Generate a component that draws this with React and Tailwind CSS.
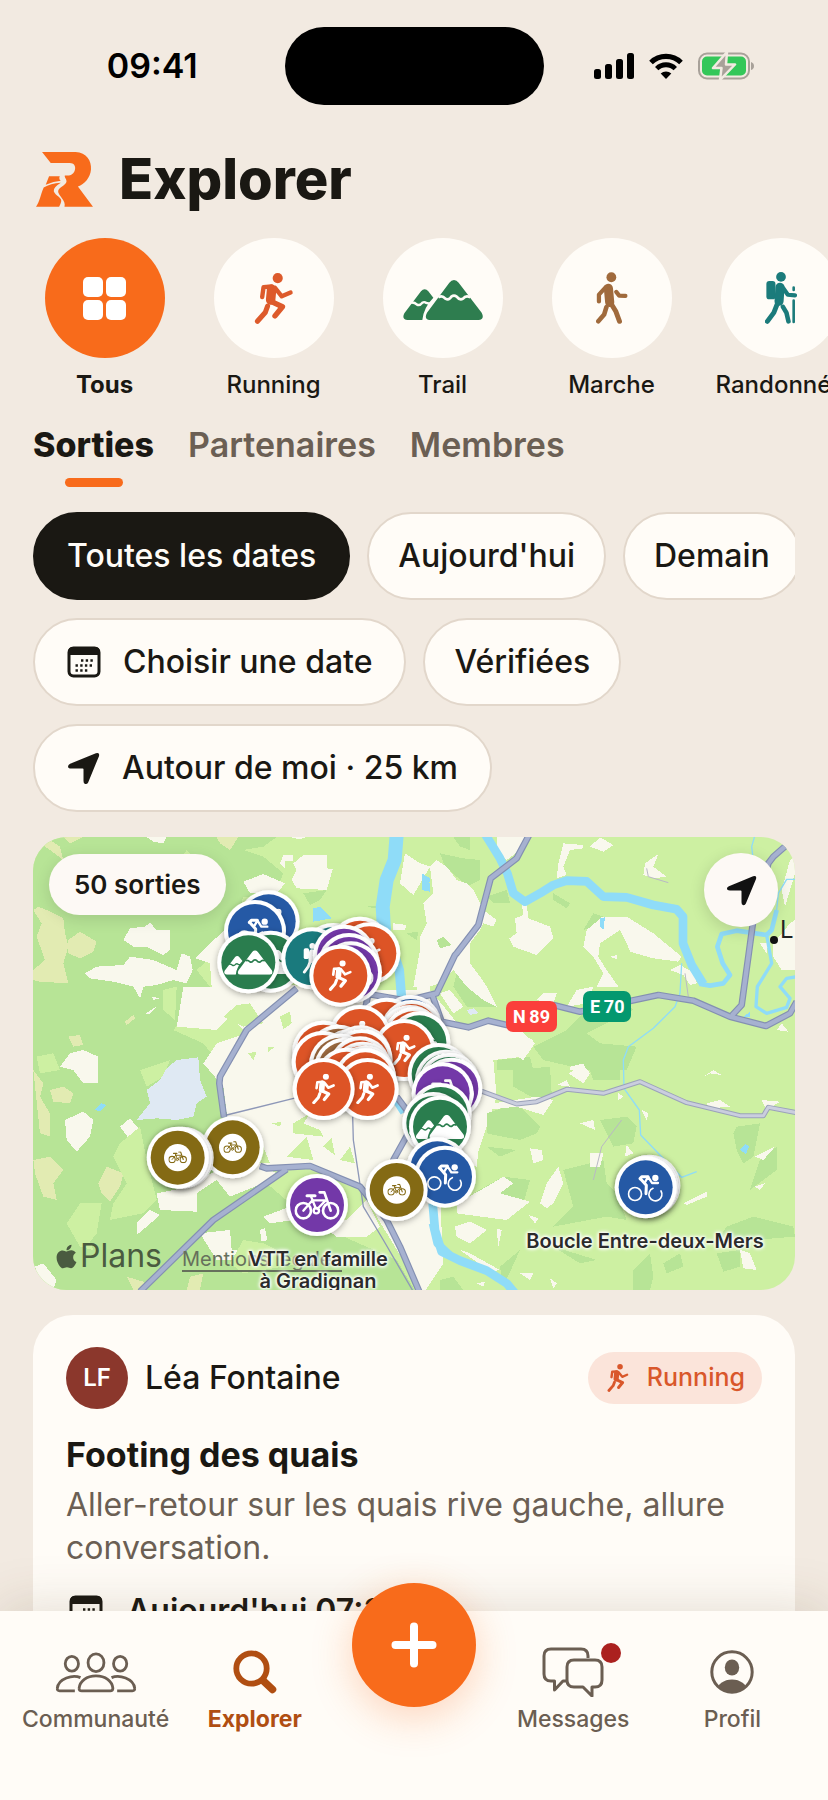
import React from "react";
import { FaApple } from "react-icons/fa";

const ORANGE = "#f86b1b";

function Runner({ className, ...rest }) {
  return (
    <svg viewBox="0 0 114 151" className={className} fill="none" stroke="currentColor" strokeLinecap="round" strokeLinejoin="round" aria-hidden="true" {...rest}>
      <circle cx="68" cy="15" r="15" fill="currentColor" stroke="none" />
      <path d="M22 71 L26 42 L50 40" strokeWidth="13" />
      <path d="M50 48 L47 80" strokeWidth="28" />
      <path d="M60 44 L80 69 L106 58" strokeWidth="13" />
      <path d="M48 84 L82 100 L60 127" strokeWidth="16" />
      <path d="M38 98 L31 117 L8 143" strokeWidth="15" />
    </svg>
  );
}

function Walker({ className, ...rest }) {
  return (
    <svg viewBox="0 0 98 157" className={className} fill="none" stroke="currentColor" strokeLinecap="round" strokeLinejoin="round" aria-hidden="true" {...rest}>
      <circle cx="47" cy="15" r="15" fill="currentColor" stroke="none" />
      <path d="M38 49 L42 92" strokeWidth="28" />
      <path d="M30 45 L9 68 L9 89" strokeWidth="13" />
      <path d="M62 60 L71 71 L90 72" strokeWidth="13" />
      <path d="M44 92 L61 120 L72 150" strokeWidth="15" />
      <path d="M32 106 L25 129 L7 150" strokeWidth="14" />
    </svg>
  );
}

function Hiker({ className, ...rest }) {
  return (
    <svg viewBox="0 0 98 160" className={className} fill="none" stroke="currentColor" strokeLinecap="round" strokeLinejoin="round" aria-hidden="true" {...rest}>
      <circle cx="49" cy="15" r="15" fill="currentColor" stroke="none" />
      <rect x="4" y="28" width="28" height="56" rx="9" fill="currentColor" stroke="none" />
      <path d="M46 47 L43 90" strokeWidth="28" />
      <path d="M56 50 L70 70 L92 72" strokeWidth="13" />
      <path d="M88 48 V55 M88 88 V154" strokeWidth="8" />
      <path d="M40 92 L27 125 L7 152" strokeWidth="15" />
      <path d="M55 107 L66 126 L72 152" strokeWidth="14" />
    </svg>
  );
}

function Mountains({ className, snow, ...rest }) {
  return (
    <svg viewBox="0 0 240 120" className={className} aria-hidden="true" {...rest}>
      <path fill="currentColor" d="M65 28 Q71 28 76 34 L91 53 Q62 82 58 120 H14 Q-5 118 4 100 L54 34 Q59 28 65 28Z" />
      <path fill="currentColor" d="M153 0 Q161 0 167 8 L236 98 Q246 118 226 120 H80 Q62 118 72 98 L139 8 Q145 0 153 0Z" />
      <path fill="none" stroke={snow} strokeWidth="8" d="M106 52 Q118 45 127 56 Q138 62 145 50 Q153 44 161 50 Q170 62 180 56 Q188 45 202 52" />
      <path fill="none" stroke={snow} strokeWidth="7" d="M22 68 Q34 66 42 74 Q50 78 58 68 Q64 64 70 69 L84 72" />
    </svg>
  );
}

function Cyclist(props) {
  return (
    <svg viewBox="0 0 108 84" fill="none" stroke="currentColor" strokeLinecap="round" strokeLinejoin="round" aria-hidden="true" {...props}>
      <circle cx="84" cy="11" r="9.500" fill="currentColor" stroke="none" />
      <circle cx="23" cy="59" r="19.500" strokeWidth="5" />
      <path d="M77 42 A19.500 19.500 0 1 0 101 50" strokeWidth="5" />
      <path d="M38 13 L44 7 H62" strokeWidth="9" />
      <path d="M40 14 L57 33 L56 58" strokeWidth="9" />
      <path d="M62 8 L54 22 M62 7 L74 26 H92" strokeWidth="7" />
    </svg>
  );
}

function Bike(props) {
  return (
    <svg viewBox="0 0 136 88" fill="none" stroke="currentColor" strokeLinecap="round" strokeLinejoin="round" aria-hidden="true" {...props}>
      <circle cx="27" cy="60" r="23" strokeWidth="8" />
      <circle cx="109" cy="60" r="23" strokeWidth="8" />
      <circle cx="66" cy="60" r="8" strokeWidth="7" />
      <path d="M38 15 H62" strokeWidth="9" />
      <path d="M50 17 L64 52 M55 28 L27 60 M55 29 H94 L69 55" strokeWidth="7" />
      <path d="M76 5 H90 L109 60" strokeWidth="8" />
    </svg>
  );
}

function Calendar({ className }) {
  return (
    <svg viewBox="0 0 34 32" className={className} aria-hidden="true">
      <rect x="2" y="2" width="30" height="28" rx="4.500" fill="none" stroke="currentColor" strokeWidth="3" />
      <path d="M1 9 V6 Q1 1 6 1 H28 Q33 1 33 6 V9Z" fill="currentColor" />
      <path d="M14 14.500 H27 M8.500 19.500 H27 M8.500 24.500 H21" stroke="currentColor" strokeWidth="2.400" strokeDasharray="2.400 2.300" />
    </svg>
  );
}

function LocationArrow({ className }) {
  return (
    <svg viewBox="0 0 32 32" className={className} aria-hidden="true">
      <path fill="currentColor" d="M28 1.200 Q32 0 31 4 L20.500 29.500 Q19.500 31.500 17.500 31 Q16 30.500 16 28 V16.800 Q16 16 15.200 16 H4 Q1 16 1 14 Q1 12.500 3 11.500Z" />
    </svg>
  );
}

function Logo() {
  return (
    <svg viewBox="47 36 170 164" className="h-[55px] w-[57px]" fill={ORANGE} role="img" aria-label="R">
      <path d="M65 36 H165 C198 38 213 62 211 88 C209 112 192 132 172 139 L217 199 H132 C138 180 112 166 113 152 C116 140 136 136 138 124 C138 115 131 112 133 106 H145 C167 104 172 69 148 69 H91 Z" />
      <path d="M86 108 H118 Q114 116 121 122 Q100 124 76 134Z" />
      <path d="M70 142 Q90 130 121 128 Q98 142 100 153 C104 166 126 172 122 184 Q120 192 116 199 H47 C58 185 60 165 70 142Z" />
    </svg>
  );
}

const FILLS = { run: "#dd5426", trail: "#2a7d4e", bike: "#7338a8", road: "#2559a5", hike: "#1a7a7d", walk: "#9c6a40", gravel: "#846a14" };

const PINS = [
  ["road", 716, 274], ["road", 675, 303], ["trail", 722, 395], ["trail", 655, 397],
  ["hike", 910, 372], ["hike", 847, 385],
  ["run", 990, 353], ["run", 1018, 370], ["bike", 942, 377], ["bike", 957, 402], ["bike", 963, 427], ["run", 931, 437],
  ["road", 1142, 588], ["run", 1070, 596], ["run", 1145, 603], ["run", 1140, 618], ["run", 1150, 625], ["trail", 1168, 637],
  ["run", 990, 618], ["run", 1123, 660],
  ["run", 880, 665], ["walk", 925, 677], ["run", 960, 690], ["walk", 992, 679], ["run", 995, 690], ["run", 878, 696],
  ["walk", 930, 704], ["walk", 945, 716], ["run", 990, 712], ["run", 998, 728], ["run", 1004, 740], ["run", 950, 746], ["run", 1006, 748],
  ["trail", 1226, 732], ["trail", 1248, 752], ["trail", 1258, 762], ["bike", 1264, 776], ["bike", 1238, 790],
  ["trail", 1232, 852], ["trail", 1210, 879], ["trail", 1230, 890],
  ["run", 1013, 777], ["run", 881, 777],
  ["road", 1222, 1015], ["road", 1245, 1040],
  ["gravel", 608, 952], ["gravel", 458, 983], ["gravel", 452, 983], ["gravel", 443, 983],
  ["bike", 861, 1125], ["gravel", 1100, 1080],
  ["road", 1858, 1067], ["road", 1852, 1069], ["road", 1847, 1072],
];

function Pin({ kind, x, y }) {
  const fill = FILLS[kind];
  return (
    <g transform={`translate(${x} ${y})`} color="#fff">
      <circle r="93" fill="#fff" filter="url(#pin-shadow)" />
      <circle r="81" fill={fill} />
      {kind === "run" && <Runner x="-35" y="-46" width="70" height="92" />}
      {kind === "walk" && <Walker x="-30" y="-46" width="60" height="92" />}
      {kind === "hike" && <Hiker x="-30" y="-46" width="60" height="92" />}
      {kind === "trail" && <Mountains snow={fill} x="-73" y="-36" width="146" height="73" />}
      {kind === "road" && <Cyclist x="-55" y="-39" width="108" height="84" />}
      {kind === "bike" && <Bike x="-68" y="-43" width="136" height="88" />}
      {kind === "gravel" && (
        <g color={fill}>
          <circle r="41" fill="#fff" />
          <Bike x="-28" y="-19" width="56" height="36" />
        </g>
      )}
    </g>
  );
}

const WOOD = "#b7e496";
const TOWN = "#f9f8ed";
const FIELD = "#e2ebb2";
const MEADOW = "#cdf0a2";
const WATER = "#8fdcf8";

function MapDrawing() {
  return (
    <svg viewBox="9 21 2286 1359" preserveAspectRatio="xMidYMid slice" className="block h-full w-full" aria-hidden="true">
      <defs>
        <filter id="pin-shadow" x="-30%" y="-30%" width="160%" height="160%">
          <feDropShadow dx="0" dy="5" stdDeviation="9" floodColor="#000" floodOpacity="0.32" />
        </filter>
      </defs>
      <rect x="0" y="0" width="2310" height="1400" fill={MEADOW} />
      <g shapeRendering="crispEdges">
        <path fill={WOOD} d="M0 21H740L700 50L640 60L700 80L760 130L730 200L705 205L640 200L600 330L500 420L540 470L430 600L520 640L560 690L600 720L600 850L640 1000L850 1180L1100 1290L1160 1390H0Z" />
        <path fill={TOWN} d="M585 300L540 340L495 385L540 400L545 470L460 470L440 590L560 600L600 560L650 610L560 640L520 700L580 770L590 850L610 1010L780 1010L850 1020L1000 1080L1040 1160L1180 1390L1240 1300L1230 1100L1330 1010L1360 920L1400 800L1390 690L1480 680L1510 630L1380 590L1290 590L1250 540L1200 480L1200 380L1170 360L1160 480L1030 480L820 470L640 440Z" />
        <g fill={TOWN}>
          <path d="M790 100L820 75H890V115L908 118L890 180L800 175L785 150L800 120ZM750 100L760 75H790V92H765V115ZM640 155L700 132L765 160L740 190L660 190ZM280 330L300 295L345 290L360 278L380 300H420V360L400 375L350 350L310 350ZM165 430L200 410L280 405L300 380L370 390L440 420L455 370L480 380L488 420L470 460L430 450L380 465L340 470L330 505L310 470L250 455L180 445ZM90 710L120 670L160 660L205 680V760L160 760L130 720ZM345 552L382 528L360 552ZM365 500L390 505L370 510ZM350 21H410L400 40L370 35ZM780 21H830L810 28Z" />
          <path d="M1125 70L1170 100L1200 110L1165 170L1150 195L1110 160ZM1090 280L1130 285L1125 300L1090 300ZM1170 360L1200 320V470L1150 470Z" />
          <path d="M105 870L160 845L190 870L180 920L140 965L110 930ZM270 890L300 865L325 895L300 930ZM320 1180L360 1140L390 1155L350 1190L320 1215ZM380 1090L480 1070L560 1020L640 1030L680 1000L740 1030L700 1060L600 1100L560 1050L500 1090V1145L390 1140ZM850 1170L950 1170L1010 1110L1050 1190L1010 1220L920 1220ZM510 1210L600 1200L605 1260L720 1265L700 1290L560 1290ZM690 1200L705 1195L712 1230L695 1235ZM700 1160L780 1130L790 1170L720 1180ZM15 1310L40 1300L80 1350L70 1380H40Z" />
        </g>
        <g fill={FIELD}>
          <path d="M25 230L50 240L100 265L105 310L115 350L100 400L115 460L30 455L10 450V420L45 390L20 320L35 280L10 240ZM115 330L150 305L200 335L190 365L150 385L115 370ZM30 40L60 30L90 50L100 90L60 60ZM560 21H625L600 60L570 40ZM100 21H160L120 40ZM285 575L310 555L315 565L290 585ZM115 620L150 615L160 645L130 650Z" />
          <path d="M60 780L100 770L130 790L120 820L70 815ZM10 990L60 980L100 1020L70 1060L80 1110L40 1100L15 1030ZM205 1060L230 1010L280 1030L270 1070L240 1115L215 1090ZM10 720L40 760L30 800L60 850L60 920L30 910ZM290 1340L340 1355L350 1380H310ZM480 1340L520 1330L510 1380H470Z" />
        </g>
        <g fill={MEADOW}>
          <path d="M270 940L330 890L350 990L380 1110L340 1150L240 1170L250 1120L290 1060L250 980ZM110 1180L150 1120H215L200 1210L180 1235L190 1260L150 1250ZM430 120L470 60L520 120L500 160ZM20 680L70 670L90 720L30 730ZM400 480L440 470L435 570L400 540ZM640 1230L700 1240L820 1300L640 1330L600 1300ZM330 720L420 690L400 740L350 770Z" />
          <path d="M620 525L660 520L700 580L640 590L600 570L580 560ZM750 560L780 545L785 580L760 598ZM655 670L680 665L670 690ZM715 650H735L715 665ZM790 880L840 850L820 880L870 900L880 920L790 910ZM770 980L830 920L850 990ZM880 950L905 925L915 975ZM930 990L960 950L975 1000ZM640 1000L700 950L720 1000ZM725 880L755 875L750 890Z" />
        </g>
        <g fill={WOOD}>
          <path d="M820 190L890 180L870 210L840 225ZM1010 230L1060 225V240ZM1130 310L1165 305L1160 330Z" />
        </g>
        <path fill="#dfe9f3" d="M320 870L360 820L350 780L390 750L410 715L440 690L505 682L510 750L530 800L500 820L490 860L440 870L380 865ZM1310 540L1330 535L1345 550L1320 555Z" />
        <path fill={WATER} d="M195 840L215 820L230 825L210 845ZM850 235L870 230L905 265L850 275ZM1175 150L1200 160V185L1175 180Z" />
        <g transform="translate(1170 0)">
          <path fill={WOOD} d="M60 70L130 85L180 90V150L140 170L110 140L75 110ZM110 430L150 410L180 480L230 530H140L100 470ZM400 190L450 220L440 235L400 210ZM490 300L520 250L555 262L530 290ZM340 650L440 600L500 540L620 520L640 540L500 610L540 640L650 650L620 720L500 720L370 690ZM200 200L260 180L270 220L220 220ZM100 21H150V60L120 50ZM230 690L330 680L340 720H230Z" />
          <path fill={TOWN} d="M30 110L50 90L80 110L110 150L140 160L160 180L190 240L230 270L220 290L190 280L180 300L150 340V400L180 440L200 470L230 530L190 510L140 470L100 420L60 460L0 480V320L20 280L10 220L40 190ZM230 21H320L300 60L260 90L230 60ZM430 40L490 45V55L450 60L430 110L440 135L410 145L415 100ZM510 50L540 22L580 45L550 65ZM675 100L715 72L700 110L740 140L700 145L670 135ZM305 220H320L325 265L390 290L400 325L350 375L280 350L268 325L290 310L285 265L310 255ZM545 262L620 260L700 310L785 380L775 395L700 385L630 365L620 340L600 300L540 340L535 380L560 420L595 470H530L550 430L520 380L490 350L500 300ZM750 420L780 405L825 430L830 460L810 465L790 435ZM370 490L410 490L400 520L350 510ZM100 605L160 600L210 570L300 600L345 640L310 690L260 660L210 640L190 680L160 720L130 660ZM470 480L520 470L500 520L440 530ZM1085 180L1110 90L1125 80V130L1095 230ZM1060 340L1110 280L1125 270V420L1085 420L1060 380ZM1020 340H1045L1040 370ZM1070 600L1085 580L1105 605ZM60 490L90 480L130 530L100 550ZM570 380L590 375V388ZM450 710L490 700L500 720H450Z" />
          <path fill={WOOD} d="M50 330L70 320L95 345L60 355Z" />
          <path fill={WATER} d="M5 130L30 145L25 185L5 170ZM540 265L555 262L550 300L540 290ZM970 560L990 545V560Z" />
        </g>
        <g transform="translate(1170 690)">
          <path fill={WOOD} d="M200 160L290 130L360 200L350 220L300 240L200 220ZM280 30L390 20L395 100L350 120L280 80ZM500 0H600V60L520 60ZM540 180L620 170L650 200L640 250L580 260L560 220ZM430 330L550 300L560 370L590 400L620 480L560 470L400 500L460 440ZM160 400L250 350L330 360L310 430L200 430ZM950 200L1020 190L1000 290L970 310L950 270L940 220ZM1000 360L1020 300L1070 260V330L990 390ZM920 500L1000 470L1120 500L1125 530L1000 540L900 530ZM240 620L300 570L250 680ZM640 630L690 580L700 650L690 690H640ZM730 610L780 580L790 620L740 640ZM400 560L530 600L480 610ZM890 580L960 570V620L910 635ZM60 660L100 650L130 690H60ZM200 260L290 270L240 290Z" />
          <path fill={TOWN} d="M445 40L490 15L510 40L490 70ZM330 265L365 270L370 300L340 310ZM480 190L520 180L525 210ZM510 280H550L540 320H510ZM360 430L380 370L415 320L430 370L400 430L380 445ZM110 430L200 380L250 350L280 370L240 400L330 425L260 480L110 460ZM105 500L150 485L200 510L150 550L110 530ZM790 430L860 395V410L800 435ZM1005 290L1065 260L1030 300ZM960 570L990 580L1010 630L970 625ZM860 130L900 120L930 140L870 145ZM1025 120L1080 125L1040 150ZM850 50L880 30L905 45L870 40ZM160 100L220 130L350 110L400 120L370 165L290 140L200 150L180 230L170 320L120 300L130 150ZM620 255L640 280L615 290ZM120 570L150 580L240 630L210 635ZM300 640H340L330 660ZM410 75L440 60L450 80ZM665 150L685 160L680 180ZM325 465L355 475L345 490ZM230 505L245 510L235 560ZM170 670L195 665L190 680ZM390 655L410 670L400 685ZM595 100L610 110L595 120ZM1005 380L1035 370L1020 390Z" />
          <path fill={WATER} d="M960 270L975 252L988 258L978 282Z" />
        </g>
      </g>
      <g fill="none" stroke={WATER} strokeLinejoin="round">
        <path strokeWidth="42" d="M1100 15L1094 90L1070 150L1058 230L1062 300" />
        <path strokeWidth="28" d="M1062 290L1085 350L1108 420L1116 520" />
        <path strokeWidth="14" d="M1096 815L1118 850" />
        <path strokeWidth="26" d="M1208 1120L1215 1200L1235 1265L1290 1292L1370 1322L1430 1360L1455 1390" />
        <path strokeWidth="24" d="M1208 1180L1222 1240L1260 1276" />
        <g transform="translate(1170 0)">
          <path strokeWidth="26" d="M195 12L240 85L262 130L280 190L315 215L360 190L400 165L440 152L500 154L550 200L620 202L700 225L770 238L789 260V340L815 405L850 462" />
          <path strokeWidth="14" d="M840 462L870 467L910 460L930 435L908 400L892 350L905 312L950 302L1040 315L1055 300L1070 240" />
          <path strokeWidth="4" d="M1070 240L1075 190L1100 148H1130M998 75L995 50L1005 15" />
          <path strokeWidth="10" d="M1040 315L1055 400L1012 470L1008 530L1040 550L1100 532L1110 505L1080 470L1100 445L1130 440" />
          <path strokeWidth="4" d="M785 400L780 490L765 530L700 595L625 650L610 690L612 775L658 840L662 915L725 980L785 1042L830 1025" />
        </g>
      </g>
      <g fill="none" strokeLinejoin="round">
        <g stroke="#8e98b8" strokeWidth="4">
          <path d="M590 855L800 803M968 860L970 930L1000 1130L1060 1230L1150 1385" />
          <path stroke="#b9b9c4" strokeWidth="3" d="M1690 1050L1715 950L1775 870M1850 115L1855 140L1915 158M1965 430L1975 500" />
        </g>
        {["#8490b2", "#a6b1d0"].map((stroke, i) => (
          <g key={stroke} stroke={stroke} strokeWidth={i ? 13 : 20}>
            <path d="M800 475L650 600L570 740L568 760L582 862" />
            <path d="M1005 540L1015 492L1130 512L1220 490L1275 375L1280 370L1345 285L1382 145L1460 85L1500 10" />
            <path d="M1205 490L1235 575L1315 592L1375 572L1430 585L1570 525L1650 545L1790 515L1885 495L1990 512L2100 560L2208 588L2280 550L2300 515" />
            <path d="M2105 557L2135 525L2155 380L2170 270L2215 100L2230 80L2270 45" />
            <path d="M690 1008L710 1015L840 1008L990 1070L1070 1170L1110 1250L1170 1390M770 1018L550 1170L330 1385" />
            <path d="M1100 800L1130 840L1140 900L1090 990L1070 1080" />
          </g>
        ))}
        {["#9ba2ba", "#cacede"].map((stroke, i) => (
          <path key={stroke} stroke={stroke} strokeWidth={i ? 9 : 15} d="M1350 782L1460 822L1520 815L1610 778L1720 790L1830 755L1970 818L2130 857H2200L2215 832L2300 848" />
        ))}
      </g>
      {PINS.map(([kind, x, y], i) => (
        <Pin key={i} kind={kind} x={x} y={y} />
      ))}
    </svg>
  );
}

const CATEGORIES = [
  {
    label: "Tous",
    active: true,
    icon: (
      <span className="grid grid-cols-2 gap-[3px]">
        <span className="size-5 rounded-[5px] bg-white" />
        <span className="size-5 rounded-[5px] bg-white" />
        <span className="size-5 rounded-[5px] bg-white" />
        <span className="size-5 rounded-[5px] bg-white" />
      </span>
    ),
  },
  { label: "Running", icon: <Runner className="h-[51px] w-10 text-[#dd5a2b]" /> },
  { label: "Trail", icon: <Mountains snow="#fffcf7" className="mt-1 h-10 w-20 text-[#2e7d4f]" /> },
  { label: "Marche", icon: <Walker className="h-[52px] w-8 text-[#a06a3c]" /> },
  { label: "Randonnée", icon: <Hiker className="h-[52px] w-8 text-[#1b7b7b]" /> },
];

function Chip({ active, icon, children }) {
  const base = "flex h-[88px] shrink-0 items-center gap-[22px] rounded-full border-2 text-[32px] font-medium whitespace-nowrap";
  const tone = active ? "border-[#1a1813] bg-[#1a1813] text-[#fffcf7]" : "border-[#e2d7cb] bg-[#fffcf7] text-[#1a1813]";
  const pad = active || icon ? "px-8" : "px-[29px]";
  return (
    <button type="button" className={`${base} ${tone} ${pad}`}>
      {icon}
      {children}
    </button>
  );
}

function StatusBar() {
  return (
    <div className="grid grid-cols-[1fr_259px_1fr] items-center pt-[27px]">
      <time className="pl-5 text-center text-[34px] leading-10 font-semibold text-black">09:41</time>
      <div className="h-[78px] rounded-[39px] bg-black" />
      <div className="flex items-center justify-center gap-[15px] pr-6">
        <svg viewBox="0 0 40 26" className="h-[26px] w-10" aria-label="Réseau" role="img">
          <rect x="0" y="16" width="7" height="10" rx="2.500" />
          <rect x="11" y="11" width="7" height="15" rx="2.500" />
          <rect x="22" y="6" width="7" height="20" rx="2.500" />
          <rect x="33" y="0" width="7" height="26" rx="2.500" />
        </svg>
        <svg viewBox="0 0 34 26" className="h-[26px] w-[34px]" fill="none" stroke="#000" aria-label="Wi-Fi" role="img">
          <path d="M2 9.500 A21.500 21.500 0 0 1 32 9.500" strokeWidth="5.200" />
          <path d="M7.700 15.600 A13.200 13.200 0 0 1 26.300 15.600" strokeWidth="4.800" />
          <path d="M17 26 L11.700 20.600 A7.500 7.500 0 0 1 22.300 20.600Z" fill="#000" stroke="none" />
        </svg>
        <svg viewBox="0 0 56 28" className="h-7 w-14" aria-label="Batterie en charge" role="img">
          <rect x="1" y="1.500" width="50" height="25" rx="8" fill="none" stroke="#a8a199" strokeWidth="2" />
          <path d="M53 10 Q56 11 56 14 Q56 17 53 18Z" fill="#a8a199" />
          <rect x="4" y="4.500" width="44" height="19" rx="5" fill="#34c759" />
          <path d="M29 0 L15 16 H23.500 L22 28 L37 12.500 H28Z" fill="#a8a199" stroke="#f2eae1" strokeWidth="2.500" strokeLinejoin="round" />
        </svg>
      </div>
    </div>
  );
}

function NavItem({ label, active, icon }) {
  return (
    <a href="#" className={active ? "flex flex-1 flex-col items-center font-bold text-[#b04e12]" : "flex flex-1 flex-col items-center font-medium text-[#6b5e52]"}>
      <span className="flex h-[54px] items-center">{icon}</span>
      <span className="mt-1 text-[23px] leading-8">{label}</span>
    </a>
  );
}

function TabBar() {
  return (
    <nav className="relative flex h-[189px] shrink-0 bg-[#fffcf7] px-4 pt-[34px] shadow-[0_-4px_50px_rgba(90,60,30,0.16)]">
      <NavItem
        label="Communauté"
        icon={
          <svg viewBox="44 60 248 126" className="h-[42px] w-[82px]" fill="none" stroke="currentColor" strokeWidth="8.500" strokeLinecap="butt" aria-hidden="true">
            <ellipse cx="95" cy="98" rx="20" ry="22.500" />
            <ellipse cx="241" cy="98" rx="20" ry="22.500" />
            <ellipse cx="168" cy="95" rx="24" ry="27" />
            <path d="M117 172 C119 150 140 135 168 135 C196 135 217 150 219 172 Q219 180 211 180 H125 Q116 180 117 172Z" />
            <path d="M121 140 C98 130 54 142 51 172 Q50 180 58 180 H104" />
            <path d="M215 140 C238 130 282 142 285 172 Q286 180 278 180 H232" />
          </svg>
        }
      />
      <NavItem
        label="Explorer"
        active
        icon={
          <svg viewBox="0 0 44 44" className="size-11" fill="none" stroke="currentColor" strokeLinecap="round" aria-hidden="true">
            <circle cx="18.500" cy="18.500" r="15.200" strokeWidth="5.800" />
            <path d="M31 31.500 L39.500 39.500" strokeWidth="7.500" />
          </svg>
        }
      />
      <div className="flex-1" />
      <NavItem
        label="Messages"
        icon={
          <span className="relative">
            <svg viewBox="0 0 62 50" className="h-[50px] w-[62px]" fill="none" stroke="currentColor" strokeWidth="3" strokeLinejoin="round" aria-hidden="true">
              <path d="M46 11 V9 Q46 2 39 2 H9 Q2 2 2 9 V27 Q2 34 9 34 H12.500 V43 L21 34 H25" />
              <path d="M32 13 H53 Q60 13 60 20 V33 Q60 40 53 40 H50 V49 L41 40 H32 Q25 40 25 33 V20 Q25 13 32 13Z" />
            </svg>
            <span className="absolute -top-1 left-[59px] size-5 rounded-full bg-[#ab211f]" />
          </span>
        }
      />
      <NavItem
        label="Profil"
        icon={
          <svg viewBox="0 0 44 44" className="size-11" aria-hidden="true">
            <clipPath id="profile-clip"><circle cx="22" cy="22" r="20" /></clipPath>
            <circle cx="22" cy="22" r="20.200" fill="none" stroke="currentColor" strokeWidth="3" />
            <ellipse cx="22" cy="17.500" rx="7.200" ry="8" fill="currentColor" />
            <ellipse cx="22" cy="41" rx="15" ry="11.500" fill="currentColor" clipPath="url(#profile-clip)" />
          </svg>
        }
      />
      <button type="button" aria-label="Créer une sortie" className="absolute -top-7 left-1/2 flex size-[124px] -translate-x-1/2 items-center justify-center rounded-full bg-[#f86b1b] shadow-[0_10px_40px_rgba(248,107,27,0.28)]">
        <svg viewBox="0 0 46 46" className="size-[46px]" stroke="#fff" strokeWidth="8" strokeLinecap="round" aria-hidden="true">
          <path d="M23 4.500 V41.500 M4.500 23 H41.500" />
        </svg>
      </button>
    </nav>
  );
}

const HALO = "[text-shadow:0_0_3px_#fff,0_0_3px_#fff,0_0_4px_#fff,0_0_5px_#fff]";

export default function App() {
  return (
    <div className="flex h-screen flex-col overflow-hidden bg-[#f2eae1] font-['Inter','Liberation_Sans',sans-serif] text-[#1a1813]">
      <main className="min-h-0 flex-1 overflow-hidden">
        <StatusBar />

        <header className="mt-10 flex h-[68px] items-center gap-[26px] px-9">
          <Logo />
          <h1 className="text-[56px] leading-[68px] font-extrabold">Explorer</h1>
        </header>

        <div className="mt-[25px] flex gap-6 overflow-hidden pl-8">
          {CATEGORIES.map((c) => (
            <button key={c.label} type="button" className="flex w-[145px] shrink-0 flex-col items-center">
              <span className={c.active ? "flex size-[120px] items-center justify-center rounded-full bg-[#f86b1b]" : "flex size-[120px] items-center justify-center rounded-full bg-[#fffcf7]"}>
                {c.icon}
              </span>
              <span className={c.active ? "mt-[11px] text-2xl leading-8 font-bold" : "mt-[11px] text-2xl leading-8 font-medium"}>{c.label}</span>
            </button>
          ))}
        </div>

        <div className="px-[33px]">
          <div role="tablist" className="mt-[22px] flex gap-[34px] text-[34px] leading-11 font-semibold text-[#6b5f54]">
            <button type="button" role="tab" aria-selected="true" className="flex flex-col items-center font-extrabold text-[#1a1813]">
              Sorties
              <span className="mt-[11px] h-[9px] w-[58px] rounded-full bg-[#f86b1b]" />
            </button>
            <button type="button" role="tab" aria-selected="false" className="self-start">Partenaires</button>
            <button type="button" role="tab" aria-selected="false" className="self-start">Membres</button>
          </div>

          <div className="mt-[25px] flex flex-col gap-[18px]">
            <div className="flex gap-[17px] overflow-hidden">
              <Chip active>Toutes les dates</Chip>
              <Chip>Aujourd'hui</Chip>
              <Chip>Demain</Chip>
            </div>
            <div className="flex gap-[17px]">
              <Chip icon={<Calendar className="h-8 w-[34px]" />}>Choisir une date</Chip>
              <Chip>Vérifiées</Chip>
            </div>
            <div className="flex">
              <Chip icon={<LocationArrow className="size-[33px]" />}>Autour de moi · 25 km</Chip>
            </div>
          </div>

          <section aria-label="Carte des sorties" className="relative mt-[25px] h-[453px] overflow-hidden rounded-[34px]">
            <MapDrawing />
            <span className="absolute top-[164px] left-[473px] rounded-[7px] bg-[#fb3f3b] px-[7px] text-lg leading-[31px] font-bold text-white font-['Roboto',sans-serif]">N&#8201;89</span>
            <span className="absolute top-[154px] left-[550px] rounded-[7px] bg-[#04986f] px-[7px] text-lg leading-[31px] font-bold text-white font-['Roboto',sans-serif]">E&#8201;70</span>
            <span className="absolute top-[99px] left-[737px] size-2 rounded-full bg-[#111]" />
            <span className="absolute top-[77px] left-[747px] text-2xl leading-8 text-[#222]">L</span>
            <span className="absolute top-[399px] left-[20px] flex items-center text-[32px] leading-10 text-[#4a5b40]">
              <FaApple className="size-[27px]" />
              Plans
            </span>
            <a href="#" className="absolute top-[408px] left-[149px] text-xl leading-7 text-[#66705c] underline decoration-2 underline-offset-4">Mentions légales</a>
            <span className={`absolute top-[411px] left-[285px] -translate-x-1/2 text-center text-xl leading-[22px] font-semibold whitespace-nowrap text-[#2b2b2b] ${HALO}`}>
              VTT en famille
              <br />à Gradignan
            </span>
            <span className={`absolute top-[390px] left-[612px] -translate-x-1/2 text-xl leading-7 font-semibold whitespace-nowrap text-[#2b2b2b] ${HALO}`}>Boucle Entre-deux-Mers</span>
            <span className="absolute top-[17px] left-4 rounded-full bg-[#fdf9f5] px-[25px] text-[26px] leading-[61px] font-semibold text-[#1a1813] shadow-[0_4px_16px_rgba(0,0,0,0.12)]">50 sorties</span>
            <button type="button" aria-label="Me localiser" className="absolute top-4 right-[17px] flex size-[74px] items-center justify-center rounded-full bg-[#fdf9f5] text-[#111] shadow-[0_4px_16px_rgba(0,0,0,0.14)]">
              <LocationArrow className="size-[31px]" />
            </button>
          </section>

          <article className="mt-[25px] rounded-[40px] bg-[#fffcf7] px-[33px] pt-8 pb-8">
            <div className="flex items-center gap-[17px]">
              <span className="flex size-[62px] items-center justify-center rounded-full bg-[#8b372c] text-2xl font-semibold text-white">LF</span>
              <span className="text-[32px] leading-10 font-medium">Léa Fontaine</span>
              <span className="ml-auto flex h-[52px] items-center gap-4 rounded-full bg-[#fbe4da] px-[17px] text-[25px] font-medium text-[#d9572b]">
                <Runner className="h-7 w-[26px]" />
                Running
              </span>
            </div>
            <h2 className="mt-6 text-[34px] leading-11 font-bold">Footing des quais</h2>
            <p className="mt-[6px] text-[32px] leading-[43px] text-[#6b5f54]">Aller-retour sur les quais rive gauche, allure conversation.</p>
            <p className="mt-5 flex items-center gap-6 text-[32px] leading-11 font-semibold">
              <Calendar className="ml-[3px] h-8 w-[34px]" />
              Aujourd'hui 07:30
            </p>
          </article>
        </div>
      </main>
      <TabBar />
    </div>
  );
}
